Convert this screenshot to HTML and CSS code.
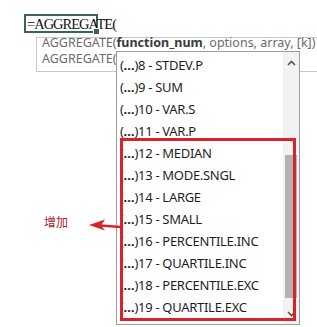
FILE: index.html
```html
<!DOCTYPE html>
<html lang="zh">
<head>
<meta charset="utf-8">
<title>AGGREGATE</title>
<link rel="stylesheet" href="styles.css">
</head>
<body>
<div class="sheet">
  <div class="cell">
    <span class="formula">=AGGREGATE(</span>
    <span class="handle"></span>
  </div>

  <div class="tip">
    <div class="tip-lines">
      <div class="tip-line">AGGREGATE(<b>function_num</b>, options, array, [k])</div>
      <div class="tip-line">AGGREGATE(function_num, options, ref1, ...)</div>
    </div>
  </div>

  <div class="dropdown">
    <ul class="list">
      <li class="item"><span class="ico">(<b>…</b>)</span>8 - STDEV.P</li>
      <li class="item"><span class="ico">(<b>…</b>)</span>9 - SUM</li>
      <li class="item"><span class="ico">(<b>…</b>)</span>10 - VAR.S</li>
      <li class="item"><span class="ico">(<b>…</b>)</span>11 - VAR.P</li>
      <li class="item"><span class="ico">(<b>…</b>)</span>12 - MEDIAN</li>
      <li class="item"><span class="ico">(<b>…</b>)</span>13 - MODE.SNGL</li>
      <li class="item"><span class="ico">(<b>…</b>)</span>14 - LARGE</li>
      <li class="item"><span class="ico">(<b>…</b>)</span>15 - SMALL</li>
      <li class="item"><span class="ico">(<b>…</b>)</span>16 - PERCENTILE.INC</li>
      <li class="item"><span class="ico">(<b>…</b>)</span>17 - QUARTILE.INC</li>
      <li class="item"><span class="ico">(<b>…</b>)</span>18 - PERCENTILE.EXC</li>
      <li class="item"><span class="ico">(<b>…</b>)</span>19 - QUARTILE.EXC</li>
    </ul>
    <div class="scrollbar">
      <div class="sb-btn sb-up">
        <svg width="9" height="6" viewBox="0 0 9 6"><path d="M1 5 L4.5 1.5 L8 5" fill="none" stroke="#555" stroke-width="1.6"/></svg>
      </div>
      <div class="sb-track"><div class="sb-thumb"></div></div>
      <div class="sb-btn sb-down">
        <svg width="9" height="6" viewBox="0 0 9 6"><path d="M1 1 L4.5 4.5 L8 1" fill="none" stroke="#555" stroke-width="1.6"/></svg>
      </div>
    </div>
    <div class="highlight"></div>
  </div>

  <div class="note">
    <span class="note-label">增加</span>
    <svg class="note-arrow" width="34" height="16" viewBox="0 0 34 16">
      <path d="M12 8.5 L33 10" stroke="#d8232a" stroke-width="2.4" fill="none"/>
      <path d="M1 8 L17 2.5 L13 8.5 L17 13.5 Z" fill="#d8232a"/>
    </svg>
  </div>
</div>
</body>
</html>
```

FILE: styles.css
```css
html, body {
  margin: 0;
  padding: 0;
  background: #ffffff;
}

.sheet {
  position: relative;
  width: 317px;
  height: 327px;
  overflow: hidden;
  font-family: "Noto Sans", "Open Sans", sans-serif;
  padding-top: 14px;
  box-sizing: border-box;
}

.cell {
  position: relative;
  margin-left: 24px;
  width: 74px;
  height: 19px;
  box-sizing: border-box;
  border: 2px solid #35684f;
  white-space: nowrap;
}

.formula {
  display: block;
  padding-left: 1px;
  font-family: "Liberation Serif", "DejaVu Serif", serif;
  font-size: 14.5px;
  letter-spacing: -1px;
  line-height: 16px;
  color: #111;
}

.handle {
  position: absolute;
  right: -4px;
  bottom: -4px;
  width: 5px;
  height: 5px;
  background: #35684f;
  border: 1px solid #fff;
}

.tip {
  position: absolute;
  left: 36px;
  top: 37px;
  width: 300px;
  height: 35px;
  box-sizing: border-box;
  border: 1px solid #c8c8c8;
  background: #fff;
  padding: 0 0 0 5px;
  font-size: 12.5px;
  color: #6b6b6b;
  white-space: nowrap;
}

.tip-lines {
  margin-top: -3px;
}

.tip-line {
  line-height: 16px;
}

.tip-line b {
  color: #3a3a3a;
  font-weight: 700;
}

.dropdown {
  position: absolute;
  left: 116px;
  top: 51px;
  width: 184px;
  height: 274px;
  box-sizing: border-box;
  border: 1px solid #9c9c9c;
  background: #fff;
  display: flex;
}

.list {
  list-style: none;
  margin: 0;
  padding: 2px 0 0 3px;
  flex: 1;
  min-width: 0;
}

.item {
  height: 22px;
  line-height: 22px;
  font-size: 13px;
  letter-spacing: -0.3px;
  color: #1e1e1e;
  white-space: nowrap;
}

.ico b {
  font-weight: 700;
}

.scrollbar {
  width: 16px;
  display: flex;
  flex-direction: column;
  background: #f2f2f2;
}

.sb-btn {
  display: flex;
  align-items: center;
  justify-content: center;
}

.sb-up {
  height: 22px;
}

.sb-down {
  height: 20px;
}

.sb-track {
  flex: 1;
  padding-top: 81px;
  display: flex;
  justify-content: center;
}

.sb-thumb {
  width: 12px;
  height: 143px;
  background: #b2b2b2;
}

.highlight {
  position: absolute;
  left: 3px;
  top: 86px;
  width: 176px;
  height: 183px;
  box-sizing: border-box;
  border: 3px solid #d8232a;
}

.note {
  position: absolute;
  left: 44px;
  top: 211px;
  display: flex;
  align-items: center;
  gap: 20px;
}

.note-label {
  font-family: "Noto Sans CJK SC", "Noto Sans", sans-serif;
  font-size: 12px;
  color: #a8262b;
  line-height: 18px;
}

.note-arrow {
  display: block;
  margin-top: 6px;
}
```
